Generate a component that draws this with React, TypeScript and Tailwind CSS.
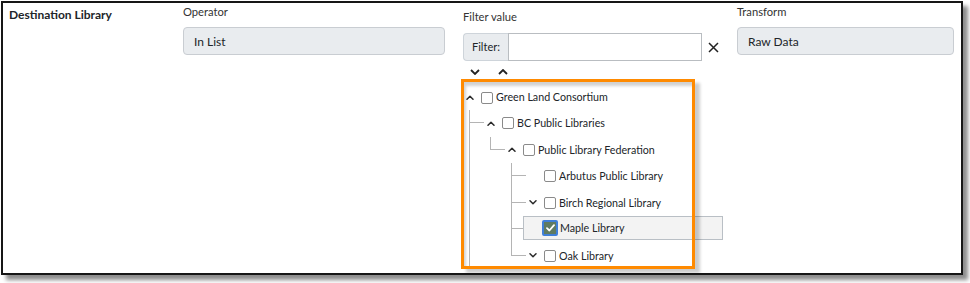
import type { ReactNode } from 'react'

const FONT = { fontFamily: 'Lato, "Open Sans", Arial, sans-serif' }

function Caret({ dir }: { dir: 'up' | 'down' }) {
  return (
    <svg width="8" height="5" viewBox="0 0 8 5" fill="none" aria-hidden>
      <path
        d={dir === 'up' ? 'M1 4.2 L4 1.2 L7 4.2' : 'M1 0.8 L4 3.8 L7 0.8'}
        stroke="#2b2b2b"
        strokeWidth="1.5"
        strokeLinecap="round"
        strokeLinejoin="round"
      />
    </svg>
  )
}

function Box({ checked }: { checked?: boolean }) {
  if (checked) {
    return (
      <span className="flex h-[16px] w-[16px] shrink-0 items-center justify-center rounded-[2px] border-2 border-[#3f7fd8] bg-white">
        <span className="flex h-[12px] w-[12px] items-center justify-center bg-[#5f7b62]">
          <svg width="9" height="8" viewBox="0 0 9 8" fill="none" aria-hidden>
            <path d="M1 4.2 L3.4 6.5 L8 1.2" stroke="#fff" strokeWidth="1.8" strokeLinecap="round" strokeLinejoin="round" />
          </svg>
        </span>
      </span>
    )
  }
  return <span className="h-[12px] w-[12px] shrink-0 rounded-[2px] border border-[#8a8a8a] bg-white" />
}

type Node = {
  label: string
  caret?: 'up' | 'down'
  checked?: boolean
  selected?: boolean
  children?: Node[]
}

const TREE: Node = {
  label: 'Green Land Consortium',
  caret: 'up',
  children: [
    {
      label: 'BC Public Libraries',
      caret: 'up',
      children: [
        {
          label: 'Public Library Federation',
          caret: 'up',
          children: [
            { label: 'Arbutus Public Library' },
            { label: 'Birch Regional Library', caret: 'down' },
            { label: 'Maple Library', checked: true, selected: true },
            { label: 'Oak Library', caret: 'down' },
          ],
        },
      ],
    },
  ],
}

function RowBody({ node }: { node: Node }) {
  const inner: ReactNode = (
    <>
      <span className="flex w-[14px] shrink-0 items-center justify-center">{node.caret && <Caret dir={node.caret} />}</span>
      {node.checked ? (
        <span className="ml-[2px]">
          <Box checked />
        </span>
      ) : (
        <span className="ml-[4px] flex">
          <Box />
        </span>
      )}
      <span className={node.checked ? 'ml-[2px] whitespace-nowrap' : 'ml-[3px] whitespace-nowrap'}>{node.label}</span>
    </>
  )
  if (node.selected) {
    return (
      <div className="-ml-[3px] flex h-[24px] w-[200px] shrink-0 items-center border border-[#b9bfc5] bg-[#f3f3f3] pl-[2px]">
        {inner}
      </div>
    )
  }
  return <div className="flex items-center">{inner}</div>
}

function TreeNode({ node, depth, last, open }: { node: Node; depth: number; last?: boolean; open?: boolean }) {
  // non-last children carry the full-height guide line on their wrapper;
  // the last child draws an elbow in its own connector instead
  const trailing = depth > 0 && !last
  return (
    <div className={trailing ? 'border-l border-[#b4b4b4]' : ''}>
      <div className={depth === 0 ? 'flex h-[25px] items-stretch' : 'flex h-[26.5px] items-stretch'}>
        {depth > 0 && (
          <div className={trailing ? 'w-[14px] shrink-0' : 'w-[15px] shrink-0'}>
            <div className={last ? 'h-[13px] border-b border-l border-[#b4b4b4]' : 'h-[13px] border-b border-[#b4b4b4]'} />
          </div>
        )}
        <RowBody node={node} />
      </div>
      {node.children && (
        <div className={depth === 0 ? 'ml-[6px]' : trailing ? 'ml-[20px]' : 'ml-[21px]'}>
          {node.children.map((c, i) => (
            <TreeNode
              key={c.label}
              node={c}
              depth={depth + 1}
              last={open ? false : i === node.children!.length - 1}
              open={false}
            />
          ))}
        </div>
      )}
    </div>
  )
}

export default function App() {
  return (
    <div className="h-[283px] w-[970px] bg-white text-[#212529]" style={FONT}>
      <div className="relative ml-px mt-px h-[274px] w-[962px] overflow-hidden border-2 border-[#161616] bg-white shadow-[5px_5px_4px_rgba(0,0,0,0.45)]">
        <div className="flex pl-[6px]">
          <div className="w-[174px] pt-[3px] text-[12px] font-bold leading-[18px]">Destination Library</div>

          <div className="w-[262px] pt-[1px]">
            <div className="text-[11.2px] leading-[16px] text-[#333]">Operator</div>
            <div className="mt-[7px] flex h-[28px] items-center rounded-[4px] border border-[#c9cdd2] bg-[#e9ecef] px-[10px] pt-[2px] text-[12px]">
              In List
            </div>
          </div>

          <div className="ml-[18px] w-[256px] pt-[6px]">
            <div className="text-[11.2px] leading-[16px] text-[#333]">Filter value</div>
            <div className="mt-[8px] flex h-[28px] items-center">
              <div className="flex h-full w-[45px] items-center justify-center rounded-l-[4px] border border-r-0 border-[#ced4da] bg-[#e9ecef] text-[11px]">
                Filter:
              </div>
              <input className="h-full w-[194px] border border-[#b9bdc1] bg-white outline-none" />
              <svg className="ml-[6px]" width="11" height="11" viewBox="0 0 11 11" fill="none" aria-hidden>
                <path d="M1 1 L10 10 M10 1 L1 10" stroke="#222" strokeWidth="1.5" />
              </svg>
            </div>
            <div className="mt-[4px] flex h-[14px] items-center gap-[18px] pl-[7px]">
              <svg width="10" height="6" viewBox="0 0 10 6" fill="none" aria-hidden>
                <path d="M1 1 L5 5 L9 1" stroke="#222" strokeWidth="1.8" />
              </svg>
              <svg width="10" height="6" viewBox="0 0 10 6" fill="none" aria-hidden>
                <path d="M1 5 L5 1 L9 5" stroke="#222" strokeWidth="1.8" />
              </svg>
            </div>
            <div className="mt-[6px] text-[10.7px]">
              <TreeNode node={TREE} depth={0} open />
            </div>
          </div>

          <div className="ml-[18px] w-[217px] pt-[1px]">
            <div className="text-[11.2px] leading-[16px] text-[#333]">Transform</div>
            <div className="mt-[7px] flex h-[28px] items-center rounded-[4px] border border-[#c9cdd2] bg-[#e9ecef] px-[10px] pt-[2px] text-[12px]">
              Raw Data
            </div>
          </div>
        </div>

        {/* highlight annotation over the tree */}
        <div className="pointer-events-none absolute left-[458px] top-[76px] h-[190px] w-[234px] border-[3px] border-[#ff8a00] shadow-[5px_4px_3px_rgba(0,0,0,0.2),inset_2px_4px_3px_rgba(0,0,0,0.18)]" />
      </div>
    </div>
  )
}
